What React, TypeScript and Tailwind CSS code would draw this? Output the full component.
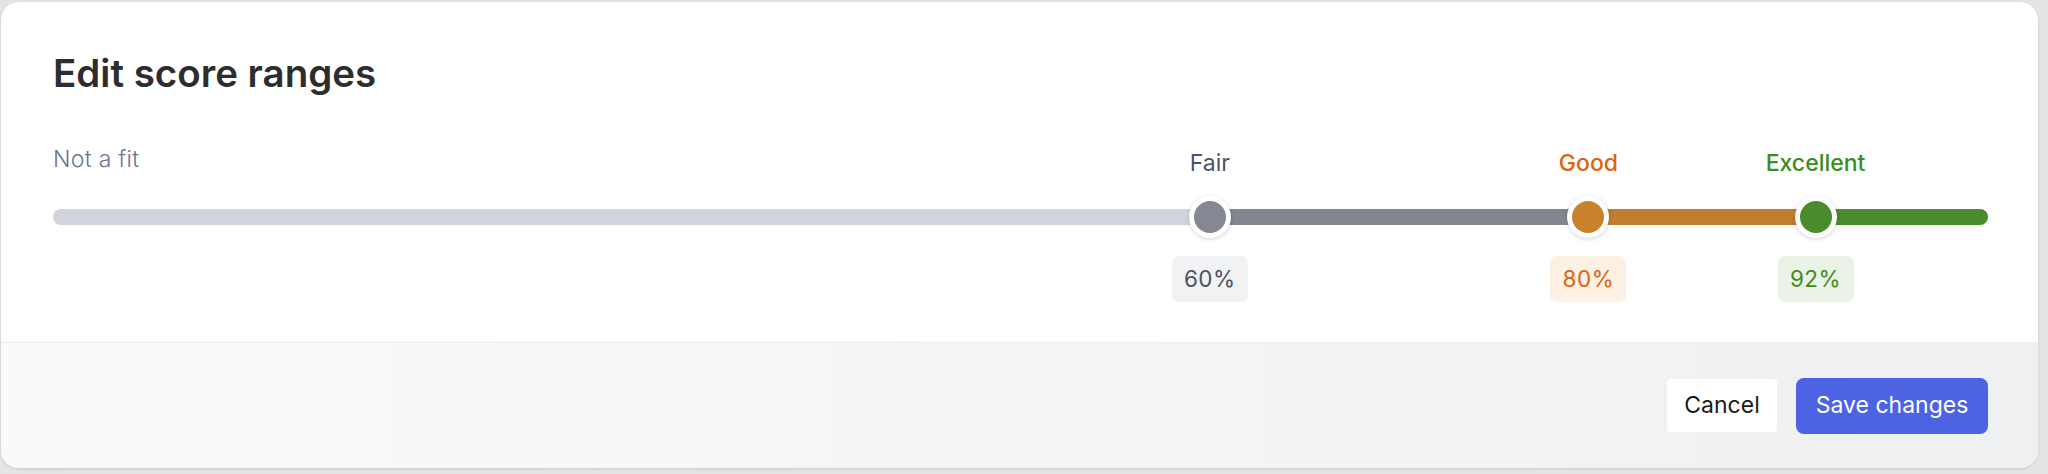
import React, { useState } from 'react';

interface Stop {
  name: string;
  value: number;
  text: string;
  weight: string;
  dot: string;
  bar: string;
  badge: string;
}

const stops: Stop[] = [
  { name: 'Fair', value: 60, text: 'text-[#4d5165]', weight: 'font-normal', dot: 'bg-[#858892]', bar: 'bg-[#84868f]', badge: 'bg-[#f1f2f4]' },
  { name: 'Good', value: 80, text: 'text-[#dc6410]', weight: 'font-medium', dot: 'bg-[#c8822c]', bar: 'bg-[#c07d2b]', badge: 'bg-[#fdf1e3]' },
  { name: 'Excellent', value: 92, text: 'text-[#3b8d1f]', weight: 'font-medium', dot: 'bg-[#4a8c2b]', bar: 'bg-[#4a8c2b]', badge: 'bg-[#ebf3e7]' },
];

// thumb centre, inset by the thumb radius like a native range input
const pos = (v: number) => `calc(21px + ${v / 100} * (100% - 42px))`;
const span = (a: number, b: number) => `calc(${(b - a) / 100} * (100% - 42px))`;

const App: React.FC = () => {
  const [values] = useState(stops);

  return (
    <div className="w-[2048px] h-[474px] bg-[#e4e4e6] pt-[2px] pl-[1px] font-['Inter',sans-serif]">
      <div className="w-[2037px] h-[466px] bg-white rounded-[18px] shadow-[0_1px_3px_rgba(0,0,0,0.12)] overflow-hidden flex flex-col">
        <div className="pl-[52px] pr-[50px] pt-[48px] flex-1">
          <h2 className="text-[38.5px] leading-[46px] font-semibold text-[#2d2d30]">
            Edit score ranges
          </h2>

          <div className="mt-[51px]">
            {/* labels */}
            <div className="relative h-[32px]">
              <span className="absolute left-0 -top-[4px] text-[23px] leading-[32px] font-light text-[#6d7393] tracking-[0.3px]">
                Not a fit
              </span>
              {values.map((s) => (
                <span
                  key={s.name}
                  className={`absolute top-0 -translate-x-1/2 text-[23px] leading-[32px] whitespace-nowrap ${s.weight} ${s.text}`}
                  style={{ left: pos(s.value) }}
                >
                  {s.name}
                </span>
              ))}
            </div>

            {/* track */}
            <div className="relative h-[42px] mt-[17px] flex items-center">
              <div className="w-full h-[16px] rounded-full bg-[#d1d4da] flex overflow-hidden">
                <div className="shrink-0" style={{ width: pos(60) }} />
                <div className={`shrink-0 ${values[0].bar}`} style={{ width: span(60, 80) }} />
                <div className={`shrink-0 ${values[1].bar}`} style={{ width: span(80, 92) }} />
                <div className={`flex-1 ${values[2].bar}`} />
              </div>
              {values.map((s) => (
                <div
                  key={s.name}
                  className="absolute top-0 -translate-x-1/2 w-[42px] h-[42px] rounded-full bg-white p-[5px] shadow-[0_1px_4px_rgba(0,0,0,0.18)]"
                  style={{ left: pos(s.value) }}
                >
                  <div className={`w-full h-full rounded-full ${s.dot}`} />
                </div>
              ))}
            </div>

            {/* values */}
            <div className="relative h-[46px] mt-[18px]">
              {values.map((s) => (
                <div
                  key={s.name}
                  className={`absolute top-0 -translate-x-1/2 w-[76px] h-[46px] rounded-[7px] flex items-center justify-center text-[22.5px] tracking-[0.5px] ${s.badge} ${s.text}`}
                  style={{ left: pos(s.value) }}
                >
                  {s.value}%
                </div>
              ))}
            </div>
          </div>
        </div>

        <div className="h-[126px] bg-gradient-to-r from-[#f9fafb] to-[#eff0f2] border-t border-[#ececee] flex items-center justify-end gap-[19px] pr-[50px]">
          <button className="w-[110px] h-[53px] bg-white rounded-[4px] text-[23px] text-[#1a1a1a]">
            Cancel
          </button>
          <button className="w-[192px] h-[56px] bg-[#4c63e4] rounded-[8px] text-[23px] text-white">
            Save changes
          </button>
        </div>
      </div>
    </div>
  );
};

export default App;
